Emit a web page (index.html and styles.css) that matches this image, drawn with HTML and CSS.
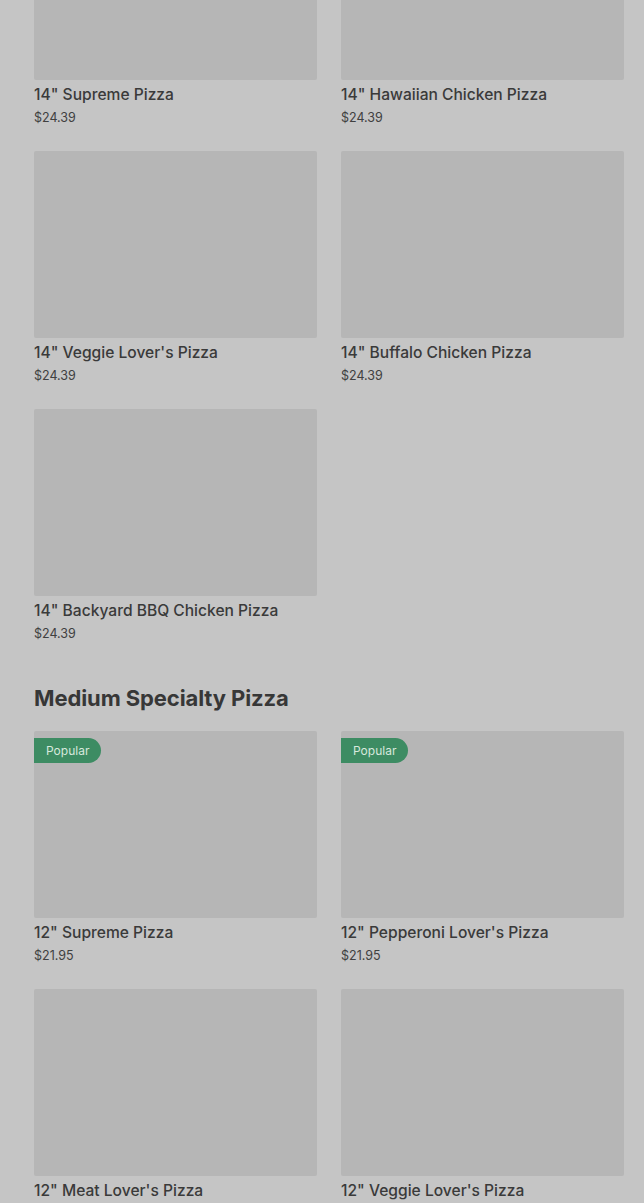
FILE: index.html
```html
<!DOCTYPE html>
<html>
<head>
<meta charset="utf-8">
<link rel="stylesheet" href="styles.css">
</head>
<body>
<main class="menu">
  <section class="section first">
    <div class="grid">
      <div class="card"><div class="thumb"></div><div class="name">14" Supreme Pizza</div><div class="price">$24.39</div></div>
      <div class="card"><div class="thumb"></div><div class="name">14" Hawaiian Chicken Pizza</div><div class="price">$24.39</div></div>
      <div class="card"><div class="thumb"></div><div class="name">14" Veggie Lover's Pizza</div><div class="price">$24.39</div></div>
      <div class="card"><div class="thumb"></div><div class="name">14" Buffalo Chicken Pizza</div><div class="price">$24.39</div></div>
      <div class="card"><div class="thumb"></div><div class="name">14" Backyard BBQ Chicken Pizza</div><div class="price">$24.39</div></div>
    </div>
  </section>
  <section class="section">
    <h2 class="heading">Medium Specialty Pizza</h2>
    <div class="grid">
      <div class="card"><div class="thumb"><span class="badge">Popular</span></div><div class="name">12" Supreme Pizza</div><div class="price">$21.95</div></div>
      <div class="card"><div class="thumb"><span class="badge">Popular</span></div><div class="name">12" Pepperoni Lover's Pizza</div><div class="price">$21.95</div></div>
      <div class="card"><div class="thumb"></div><div class="name">12" Meat Lover's Pizza</div><div class="price">$21.95</div></div>
      <div class="card"><div class="thumb"></div><div class="name">12" Veggie Lover's Pizza</div><div class="price">$21.95</div></div>
    </div>
  </section>
</main>
</body>
</html>
```
FILE: styles.css
```css
html, body {
  margin: 0;
  padding: 0;
  background: #c5c5c5;
  overflow: hidden;
}
body {
  font-family: Inter, "Noto Sans", sans-serif;
  color: #393939;
}
.menu {
  padding: 0 20px 0 34px;
  margin-top: -107px;
}
.section + .section {
  margin-top: 41px;
}
.grid {
  display: grid;
  grid-template-columns: 283px 283px;
  column-gap: 24px;
  row-gap: 24px;
}
.card {
  display: flex;
  flex-direction: column;
}
.thumb {
  position: relative;
  height: 187px;
  background: #b6b6b6;
  border-radius: 2px;
}
.name {
  margin-top: 4px;
  font-size: 15.6px;
  line-height: 22px;
  font-weight: 500;
  color: #3a3a3a;
}
.price {
  margin-top: 3px;
  font-size: 12.5px;
  line-height: 18px;
  color: #404040;
}
.heading {
  margin: 0 0 19px;
  font-size: 22px;
  line-height: 28px;
  font-weight: 700;
  letter-spacing: -0.1px;
  color: #373737;
}
.badge {
  position: absolute;
  left: 0;
  top: 7px;
  height: 25px;
  line-height: 25px;
  padding: 0 12px;
  background: #3d8c63;
  color: #d7e8dd;
  font-size: 12px;
  border-radius: 0 13px 13px 0;
}
```
